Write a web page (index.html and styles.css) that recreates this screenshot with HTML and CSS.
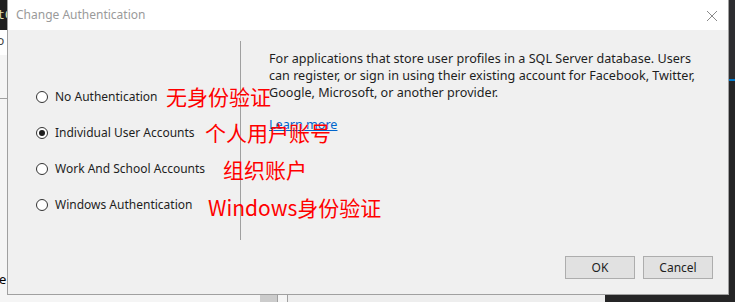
FILE: index.html
```html
<!DOCTYPE html>
<html lang="zh-CN">
<head>
  <meta charset="UTF-8">
  <title>Change Authentication</title>
  <link rel="stylesheet" href="styles.css">
</head>
<body>

  <!-- IDE behind the dialog -->
  <div class="ide">
    <div class="ide-left">
      <div class="ide-code">tC</div>
      <div class="ide-panel">o</div>
      <div class="ide-tree"></div>
      <div class="ide-line">e</div>
    </div>
    <div class="ide-middle"></div>
    <div class="ide-right">
      <div class="ide-tab"></div>
      <div class="ide-accent"></div>
    </div>
    <div class="ide-bottom">
      <div class="b-light"></div>
      <div class="b-tab"></div>
      <div class="b-sep"></div>
      <div class="b-light2"></div>
      <div class="b-dark"></div>
    </div>
  </div>

  <!-- Dialog -->
  <div class="dialog">
    <div class="title-bar">
      <span class="title">Change Authentication</span>
      <svg class="close" width="12" height="12" viewBox="0 0 12 12">
        <path d="M1 1 L11 11 M11 1 L1 11" stroke="#8a8a8a" stroke-width="1" fill="none"/>
      </svg>
    </div>

    <div class="content">
      <div class="options">
        <label class="option"><span class="radio"></span>No Authentication</label>
        <label class="option"><span class="radio checked"></span>Individual User Accounts</label>
        <label class="option"><span class="radio"></span>Work And School Accounts</label>
        <label class="option"><span class="radio"></span>Windows Authentication</label>
      </div>

      <div class="details">
        <p>For applications that store user profiles in a SQL Server database. Users<br>
          can register, or sign in using their existing account for Facebook, Twitter,<br>
          Google, Microsoft, or another provider.</p>
        <a href="#" class="learn">Learn more</a>
      </div>

      <!-- red notes drawn on top of the screenshot -->
      <span class="note note-1">无身份验证</span>
      <span class="note note-2">个人用户账号</span>
      <span class="note note-3">组织账户</span>
      <span class="note note-4">Windows身份验证</span>

      <div class="buttons">
        <button>OK</button>
        <button>Cancel</button>
      </div>
    </div>
  </div>

</body>
</html>
```

FILE: styles.css
```css
body {
  margin: 0;
  width: 735px;
  height: 302px;
  overflow: hidden;
  position: relative;
  font-family: "Noto Sans", "Open Sans", sans-serif;
  font-size: 12px;
  color: #1e1e1e;
}

/* background IDE */
.ide {
  display: grid;
  grid-template-columns: 7px 1fr 7px;
  grid-template-rows: 294px 8px;
  width: 735px;
  height: 302px;
}

.ide-left {
  display: flex;
  flex-direction: column;
  background: #f5f5f5;
  overflow: hidden;
}

.ide-code {
  height: 30px;
  background: #1e1e1e;
  color: #dcdcaa;
  font-family: "DejaVu Sans Mono", monospace;
  font-size: 13px;
  line-height: 30px;
  text-indent: -3px;
}

.ide-panel {
  height: 25px;
  background: #ffffff;
  color: #444;
  line-height: 22px;
  text-indent: -3px;
}

.ide-tree {
  height: 43px;
  border-bottom: 1px solid #a0a0a0;
  background: #f5f5f5;
}

.ide-line {
  margin-top: 171px;
  font-size: 13px;
  text-indent: -1px;
  color: #000;
}

.ide-middle {
  background: #f0f0f0;
}

.ide-right {
  display: flex;
  flex-direction: column;
  background: #252526;
}

.ide-tab {
  height: 79px;
  background: #2d2d30;
}

.ide-accent {
  height: 2px;
  background: #007acc;
}

.ide-bottom {
  grid-column: 1 / 4;
  display: flex;
}

.b-light {
  width: 260px;
  background: #f5f5f5;
}

.b-tab {
  width: 17px;
  background: #cccccc;
}

.b-sep {
  width: 9px;
  border-left: 1px solid #a0a0a0;
  border-right: 1px solid #a0a0a0;
  background: #f5f5f5;
}

.b-light2 {
  width: 317px;
  background: #eeeeee;
}

.b-dark {
  flex: 1;
  background: #252526;
}

/* dialog */
.dialog {
  position: absolute;
  left: 7px;
  top: 0;
  width: 720px;
  height: 294px;
  border: 1px solid #a0a0a0;
  border-top: none;
  background: #f0f0f0;
  display: flex;
  flex-direction: column;
}

.title-bar {
  height: 30px;
  background: #ffffff;
  display: flex;
  align-items: center;
  justify-content: space-between;
  padding: 0 10px 0 8px;
}

.title {
  font-size: 12px;
  color: #9a9a9a;
  margin-top: -1px;
}

.close {
  margin-top: 1px;
}

.content {
  flex: 1;
  position: relative;
  display: flex;
  padding-top: 11px;
}

.options {
  width: 233px;
  height: 199px;
  border-right: 1px solid #a0a0a0;
  display: flex;
  flex-direction: column;
  gap: 17px;
  padding-top: 46px;
  box-sizing: border-box;
}

.option {
  display: flex;
  align-items: center;
  gap: 7px;
  height: 19px;
  padding-left: 28px;
  white-space: nowrap;
}

.radio {
  width: 12px;
  height: 12px;
  border: 1px solid #333;
  border-radius: 50%;
  background: #fff;
  box-sizing: border-box;
  display: flex;
  align-items: center;
  justify-content: center;
}

.radio.checked::after {
  content: "";
  width: 6px;
  height: 6px;
  border-radius: 50%;
  background: #1e1e1e;
}

.details {
  padding: 0 0 0 28px;
  width: 450px;
}

.details p {
  margin: 9px 0 15px;
  line-height: 17px;
  font-size: 12.6px;
  white-space: nowrap;
}

.learn {
  color: #0066cc;
  text-decoration: underline;
  font-size: 12.6px;
}

.note {
  position: absolute;
  font-family: "Noto Sans CJK SC", sans-serif;
  font-size: 21px;
  line-height: 24px;
  color: #ff0000;
  white-space: nowrap;
}

.note-1 { left: 158px; top: 54px; }
.note-2 { left: 197px; top: 90px; }
.note-3 { left: 215px; top: 127px; }
.note-4 { left: 200px; top: 165px; }

.buttons {
  position: absolute;
  right: 15px;
  bottom: 15px;
  display: flex;
  gap: 8px;
}

.buttons button {
  width: 70px;
  height: 23px;
  background: #e1e1e1;
  border: 1px solid #adadad;
  font-family: "Noto Sans", sans-serif;
  font-size: 12px;
  color: #1e1e1e;
  padding: 0;
}
```
